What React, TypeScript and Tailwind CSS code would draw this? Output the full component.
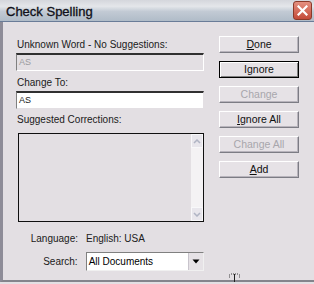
import React from "react";

const font = { fontFamily: '"Liberation Sans", Arial, sans-serif' };

function Btn({ label, u, disabled, def }: { label: string; u?: number; disabled?: boolean; def?: boolean }) {
  const chars = label.split("");
  return (
    <div
      className={
        "h-[17px] w-[80px] flex items-center justify-center text-[10.5px] leading-none " +
        (def
          ? "border border-black bg-[#e6e2e6] shadow-[inset_1px_1px_0_#ffffff,inset_-1px_-1px_0_#808080]"
          : "border border-t-[#ffffff] border-l-[#ffffff] border-r-[#7c7c84] border-b-[#7c7c84] bg-[#e6e2e6] shadow-[inset_-1px_-1px_0_#b8b4bc]") +
        (disabled ? " text-[#a8a6ac]" : " text-[#101010]")
      }
    >
      <span>
        {chars.map((c, i) => (
          <span key={i} className={i === u && !disabled ? "underline underline-offset-1" : ""}>
            {c}
          </span>
        ))}
      </span>
    </div>
  );
}

export default function App() {
  return (
    <div className="relative w-[314px] h-[284px] overflow-hidden bg-[#e3dfe3] text-black" style={font}>
      {/* title bar */}
      <div className="h-[22px] flex items-center justify-between pl-[6px] pr-[2px] bg-[linear-gradient(to_bottom,#d4d6dc_0%,#e4e6ea_30%,#c2cad4_55%,#b0bcc8_100%)] border-b border-[#6a7c98]">
        <span className="text-[13px] font-normal text-[#101018] pt-[3px] [-webkit-text-stroke:0.3px_#101018]">Check Spelling</span>
        <div className="w-[19px] h-[19px] rounded-[3px] border border-[#8a3a2a] bg-[linear-gradient(to_bottom,#e49080,#c44a38)] flex items-center justify-center">
          <svg width="11" height="11" viewBox="0 0 11 11">
            <path d="M1.5 1.5 L9.5 9.5 M9.5 1.5 L1.5 9.5" stroke="#ffffff" strokeWidth="2.2" strokeLinecap="square" />
          </svg>
        </div>
      </div>
      {/* body */}
      <div className="h-[260px] border-l-[3px] border-[#8e8c98] border-b-[2px] border-b-[#84848c] flex pl-[13px]">
        {/* left column */}
        <div className="w-[188px] flex flex-col pt-[15px]">
          <div className="h-[16px] text-[10px] leading-[16px] text-[#202020] pl-[1px]">Unknown Word - No Suggestions:</div>
          <div className="h-[18px] bg-[#e3dfe3] border-t-[2px] border-t-[#303030] border-l border-l-[#808080] border-r border-r-[#ffffff] border-b border-b-[#ffffff] text-[9px] leading-[15px] pl-[2px] text-[#9a9aa0]">
            AS
          </div>
          <div className="mt-[4px] h-[16px] text-[10px] leading-[16px] text-[#202020] pl-[1px]">Change To:</div>
          <div className="h-[18px] bg-white border-t-[2px] border-t-[#303030] border-l border-l-[#808080] border-r border-r-[#e3dfe3] border-b border-b-[#e3dfe3] text-[9px] leading-[15px] pl-[2px] text-[#202020]">
            AS
          </div>
          <div className="mt-[3px] h-[16px] text-[10px] leading-[16px] text-[#202020] pl-[1px]">Suggested Corrections:</div>
          <div className="mt-[5px] ml-[2px] h-[89px] border border-[#101010] bg-[#e3dfe3] flex justify-end">
            <div className="w-[12px] h-full bg-[#f4f2f4] flex flex-col justify-between">
              <div className="h-[14px] bg-[#e8e6ec] border border-[#f8f8fa] flex items-center justify-center">
                <svg width="8" height="5" viewBox="0 0 8 5">
                  <path d="M1 4 L4 1 L7 4" stroke="#b0b4c4" strokeWidth="1.5" fill="none" />
                </svg>
              </div>
              <div className="h-[14px] bg-[#e8e6ec] border border-[#f8f8fa] flex items-center justify-center">
                <svg width="8" height="5" viewBox="0 0 8 5">
                  <path d="M1 1 L4 4 L7 1" stroke="#b0b4c4" strokeWidth="1.5" fill="none" />
                </svg>
              </div>
            </div>
          </div>
          <div className="mt-[9px] flex items-center h-[14px] text-[10px] text-[#202020]">
            <span className="w-[62px] text-right">Language:</span>
            <span className="ml-[8px]">English: USA</span>
          </div>
          <div className="mt-[7px] flex items-center h-[19px] text-[10px] text-[#202020]">
            <span className="w-[62px] text-right">Search:</span>
            <div className="ml-[8px] w-[119px] h-[19px] bg-white border-t border-l border-t-[#808080] border-l-[#808080] border-r border-b border-r-[#f0f0f0] border-b-[#f0f0f0] flex items-center">
              <span className="flex-1 pl-[2px] leading-none text-black">All Documents</span>
              <div className="w-[15px] h-[17px] bg-[#e6e2e6] border-l border-[#c8c4cc] flex items-center justify-center">
                <svg width="8" height="5" viewBox="0 0 8 5">
                  <path d="M0.5 0.5 L7.5 0.5 L4 4.5 Z" fill="#000" />
                </svg>
              </div>
            </div>
          </div>
        </div>
        {/* right column */}
        <div className="ml-[15px] pt-[14px] flex flex-col gap-[8px]">
          <Btn label="Done" u={0} />
          <Btn label="Ignore" def />
          <Btn label="Change" disabled />
          <Btn label="Ignore All" u={0} />
          <Btn label="Change All" disabled />
          <Btn label="Add" u={0} />
        </div>
      </div>
      {/* cursor glyph overlay */}
      <svg className="absolute left-[228px] top-[273px]" width="14" height="9" viewBox="0 0 14 9">
        <path d="M1 2 h1 M3 1 h1 M5 1 h1 M7 1 h1 M9 1 h1 M11 2 h1 M1 4 h1 M11 4 h1" stroke="#404040" strokeWidth="1" />
        <path d="M6.5 1 V9" stroke="#202020" strokeWidth="1" />
      </svg>
    </div>
  );
}
